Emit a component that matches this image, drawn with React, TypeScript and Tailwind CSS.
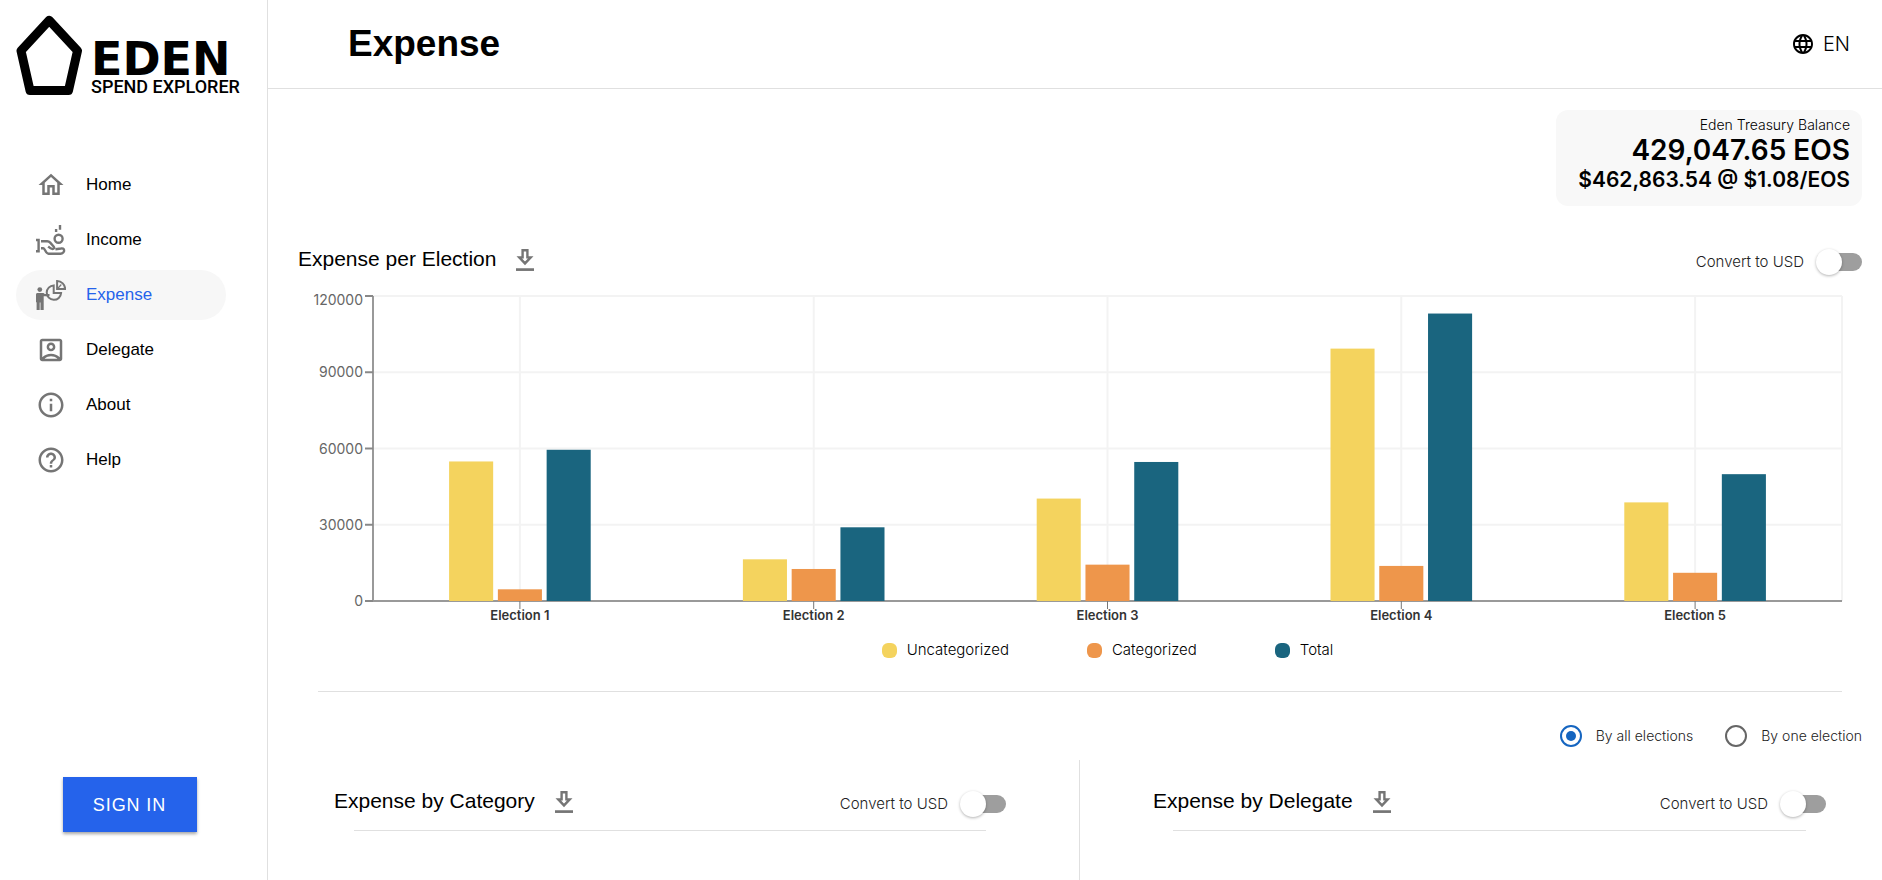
import { useId, useLayoutEffect, useRef, useState } from "react";
import type { ReactNode } from "react";
import {
  MdHelpOutline,
  MdLanguage,
  MdOutlineAccountBox,
  MdOutlineHome,
  MdOutlineInfo,
} from "react-icons/md";

const SERIES = [
  { key: "uncategorized", label: "Uncategorized", color: "#f4d35e", dot: "bg-[#f4d35e]" },
  { key: "categorized", label: "Categorized", color: "#ee964b", dot: "bg-[#ee964b]" },
  { key: "total", label: "Total", color: "#1a657f", dot: "bg-[#1a657f]" },
] as const;

const ELECTIONS = [
  { name: "Election 1", uncategorized: 54900, categorized: 4600, total: 59500 },
  { name: "Election 2", uncategorized: 16400, categorized: 12600, total: 29000 },
  { name: "Election 3", uncategorized: 40300, categorized: 14300, total: 54700 },
  { name: "Election 4", uncategorized: 99300, categorized: 13800, total: 113100 },
  { name: "Election 5", uncategorized: 38800, categorized: 11100, total: 49900 },
];

const TICKS = [0, 30000, 60000, 90000, 120000];
const MAX_VALUE = 120000;

function IncomeIcon() {
  return (
    <svg viewBox="0 0 30 30" className="size-[30px]" fill="none" stroke="currentColor" strokeWidth="2.4">
      <path d="M0 15h2.600v11.300H0" />
      <path d="M5 16.200h6.200c1.400 0 2.200.5 3 1.400l3.600 4.100c1 1.200 0 2.500-1.700 2.200-1.600-.3-2.600-1.300-3.900-2.400" />
      <path d="M5 23.300h2.300c1.800 0 2.300 5.400 5.200 5.400h12c2.300 0 3.900-1.900 3.600-3.600-.2-1.400-1.500-2-3.100-1.600l-5.600.8" />
      <circle cx="22.600" cy="13.700" r="4" />
      <path d="M20.100 4v3M24 0v4.700" />
    </svg>
  );
}

function ExpenseIcon() {
  return (
    <svg viewBox="0 0 30 30" className="size-[30px]" fill="currentColor">
      <circle cx="3.800" cy="9.600" r="2.400" />
      <path d="M1.500 13h6l1.300 1h4.700v2.200H7.700V30H4.500v-7.500h-.8V30H.6v-7.700H0v-7.600C0 13.700.6 13 1.500 13z" />
      <g fill="none" stroke="currentColor" strokeWidth="2">
        <path d="M17.700 5.400a7.200 7.200 0 1 0 7.400 7.600h-7.400z" />
        <path d="M21.100 1v8h8a8 8 0 0 0-8-8z" />
        <path d="M21.300 9l4-4.500" strokeWidth="1.200" />
      </g>
    </svg>
  );
}

function DownloadIcon() {
  return (
    <svg viewBox="0 0 18 22" className="h-[22px] w-[18px]" fill="none" stroke="currentColor" strokeWidth="2.400">
      <path d="M6.600 1.200h4.800v7.200h3.300L9 14.400 3.300 8.400h3.300z" />
      <path d="M0 20.600h18" strokeWidth="2.700" />
    </svg>
  );
}

function Logo() {
  return (
    <a href="#home" aria-label="Eden Spend Explorer" className="flex items-end gap-2 pl-4 pt-[15px] text-black">
      <svg viewBox="0 0 67 80" className="h-20 w-[67px] shrink-0" fill="none" stroke="currentColor" strokeWidth="9" strokeLinejoin="round">
        <path d="M33.200 5.200 5 35.700 14 75.500h38.500l9-39.800z" />
      </svg>
      <span className="flex flex-col gap-0.5">
        <span className="font-['DejaVu_Sans',sans-serif] text-[46px] font-bold leading-9">EDEN</span>
        <span className="font-[Roboto,sans-serif] text-lg font-medium leading-4">SPEND EXPLORER</span>
      </span>
    </a>
  );
}

const NAV: { label: string; href: string; icon: ReactNode }[] = [
  { label: "Home", href: "#home", icon: <MdOutlineHome className="size-[30px]" /> },
  { label: "Income", href: "#income", icon: <IncomeIcon /> },
  { label: "Expense", href: "#expense", icon: <ExpenseIcon /> },
  { label: "Delegate", href: "#delegate", icon: <MdOutlineAccountBox className="size-[30px]" /> },
  { label: "About", href: "#about", icon: <MdOutlineInfo className="size-[30px]" /> },
  { label: "Help", href: "#help", icon: <MdHelpOutline className="size-[30px]" /> },
];

function Sidebar() {
  return (
    <aside className="flex w-[268px] shrink-0 flex-col border-r border-[#e0e0e0]">
      <Logo />
      <nav className="mt-[65px] flex flex-col gap-[5px] pl-4">
        {NAV.map((item) => {
          const active = item.label === "Expense";
          return (
            <a
              key={item.label}
              href={item.href}
              aria-current={active ? "page" : undefined}
              className={
                active
                  ? "flex h-[50px] w-[210px] items-center gap-5 rounded-full bg-[#f7f7f7] px-5 text-[17px] text-[#2563eb]"
                  : "flex h-[50px] w-[210px] items-center gap-5 rounded-full px-5 text-[17px] text-black"
              }
            >
              <span className="text-[#757575]">{item.icon}</span>
              {item.label}
            </a>
          );
        })}
      </nav>
      <div className="mt-auto flex justify-center pb-12 pr-2">
        <button
          type="button"
          className="h-[55px] w-[134px] bg-[#2563eb] text-lg tracking-wider text-white shadow-[0_2px_3px_rgba(0,0,0,0.35)]"
        >
          SIGN IN
        </button>
      </div>
    </aside>
  );
}

function UsdSwitch() {
  const id = useId();
  return (
    <div className="flex items-center gap-4 font-[Inter,sans-serif] text-[15px] font-light text-[#222]">
      <label htmlFor={id}>Convert to USD</label>
      <input
        id={id}
        type="checkbox"
        role="switch"
        className="relative h-[18px] w-[42px] appearance-none rounded-full bg-[#9e9e9e] before:absolute before:-left-1 before:-top-1 before:size-[26px] before:rounded-full before:bg-white before:shadow-[0_1px_3px_rgba(0,0,0,0.3)] checked:bg-blue-400 checked:before:left-5"
      />
    </div>
  );
}

function SectionHeader({ title }: { title: string }) {
  return (
    <div className="flex h-12 items-center justify-between">
      <div className="flex items-center gap-5 pb-1">
        <h2 className="pb-0.5 text-[21px] text-black">{title}</h2>
        <button type="button" aria-label={`Download ${title}`} className="text-[#757575]">
          <DownloadIcon />
        </button>
      </div>
      <UsdSwitch />
    </div>
  );
}

function ExpenseChart() {
  const box = useRef<HTMLDivElement>(null);
  const [width, setWidth] = useState(1564);

  useLayoutEffect(() => {
    const node = box.current;
    if (!node) return;
    const measure = () => setWidth(node.clientWidth);
    measure();
    const observer = new ResizeObserver(measure);
    observer.observe(node);
    return () => observer.disconnect();
  }, []);

  const left = 75;
  const right = width - 20;
  const top = 10;
  const bottom = 315;
  const band = (right - left) / ELECTIONS.length;
  const y = (value: number) => bottom - (value / MAX_VALUE) * (bottom - top);

  return (
    <div ref={box} className="w-full min-w-0 overflow-hidden font-[Inter,sans-serif]">
      <svg width={width} height={344} role="img" aria-label="Expense per election" className="block">
        {TICKS.map((tick) => (
          <line key={tick} x1={left} x2={right} y1={y(tick)} y2={y(tick)} stroke="#f3f3f3" strokeWidth="2" />
        ))}
        {ELECTIONS.map((e, i) => (
          <line key={e.name} x1={left + band * (i + 0.5)} x2={left + band * (i + 0.5)} y1={top} y2={bottom} stroke="#f3f3f3" strokeWidth="2" />
        ))}
        <line x1={right} x2={right} y1={top} y2={bottom} stroke="#f3f3f3" strokeWidth="2" />
        <path d={`M${left} ${top}V${bottom + 1}M${left} ${bottom}H${right}`} stroke="#999" strokeWidth="2" />
        {TICKS.map((tick) => (
          <g key={tick}>
            <line x1={left - 8} x2={left} y1={y(tick)} y2={y(tick)} stroke="#888" strokeWidth="2" />
            <text x={left - 10} y={tick === MAX_VALUE ? y(tick) + 9 : y(tick) + 5} textAnchor="end" fill="#666" className="text-sm">
              {tick}
            </text>
          </g>
        ))}
        {ELECTIONS.map((e, i) => {
          const center = left + band * (i + 0.5);
          return (
            <g key={e.name}>
              {SERIES.map((s, j) => (
                <rect
                  key={s.key}
                  x={center + band * ((j - 1) * 0.166 - 0.075)}
                  y={y(e[s.key])}
                  width={band * 0.15}
                  height={bottom - y(e[s.key])}
                  fill={s.color}
                />
              ))}
              <line x1={center} x2={center} y1={bottom} y2={bottom + 8} stroke="#777" strokeWidth="1" />
              <text x={center} y={bottom + 19} textAnchor="middle" fill="#333" className="text-[13px] font-semibold">
                {e.name}
              </text>
            </g>
          );
        })}
      </svg>
      <ul className="flex h-10 items-center justify-center gap-[78px] pl-[75px] pr-5 text-[15px] text-black">
        {SERIES.map((s) => (
          <li key={s.key} className="flex items-center gap-2.5">
            <span className={`size-[15px] rounded-md ${s.dot}`} />
            <span className="font-light">{s.label}</span>
          </li>
        ))}
      </ul>
    </div>
  );
}

function ElectionFilter() {
  const [mode, setMode] = useState("all");
  const options = [
    { value: "all", label: "By all elections" },
    { value: "one", label: "By one election" },
  ];
  return (
    <div className="mt-8 flex h-6 items-center justify-end gap-8 font-[Inter,sans-serif] text-sm font-light text-[#222]">
      {options.map((o) => (
        <label key={o.value} className="flex items-center gap-3.5">
          <input
            type="radio"
            name="election-filter"
            value={o.value}
            checked={mode === o.value}
            onChange={() => setMode(o.value)}
            className="flex size-[22px] appearance-none items-center justify-center rounded-full border-2 border-[#666] checked:border-[#1565c0] checked:before:size-[10px] checked:before:rounded-full checked:before:bg-[#1565c0]"
          />
          {o.label}
        </label>
      ))}
    </div>
  );
}

export default function App() {
  return (
    <div className="flex min-h-screen bg-white font-['Liberation_Sans',Arial,sans-serif]">
      <Sidebar />
      <div className="flex min-w-0 flex-1 flex-col">
        <header className="flex h-[89px] items-center justify-between border-b border-[#e0e0e0] pl-20 pr-8">
          <h1 className="text-[37px] font-bold text-black">Expense</h1>
          <button type="button" className="flex items-center gap-2 font-[Inter,sans-serif] text-xl font-light text-black">
            <MdLanguage className="size-6" />
            EN
          </button>
        </header>
        <main className="flex flex-1 flex-col pl-[30px] pr-5 pt-[21px]">
          <section className="flex h-24 flex-col items-end self-end rounded-xl bg-[#f8f8f8] pl-[22px] pr-3 pt-1.5 font-[Inter,sans-serif] text-black">
            <p className="text-sm font-light leading-[18px]">Eden Treasury Balance</p>
            <p className="text-[28px] font-semibold leading-8">429,047.65 EOS</p>
            <p className="text-[21px] font-semibold leading-7">$462,863.54 @ $1.08/EOS</p>
          </section>
          <section className="mt-8 flex flex-col">
            <SectionHeader title="Expense per Election" />
            <ExpenseChart />
          </section>
          <hr className="mx-5 mt-[21px] border-[#e0e0e0]" />
          <ElectionFilter />
          <div className="mt-3 grid flex-1 grid-cols-2">
            <section className="border-r border-[#e0e0e0] pl-9 pr-[73px] pt-5">
              <SectionHeader title="Expense by Category" />
              <hr className="mx-5 mt-0.5 border-[#e0e0e0]" />
            </section>
            <section className="pl-[73px] pr-9 pt-5">
              <SectionHeader title="Expense by Delegate" />
              <hr className="mx-5 mt-0.5 border-[#e0e0e0]" />
            </section>
          </div>
        </main>
      </div>
    </div>
  );
}
